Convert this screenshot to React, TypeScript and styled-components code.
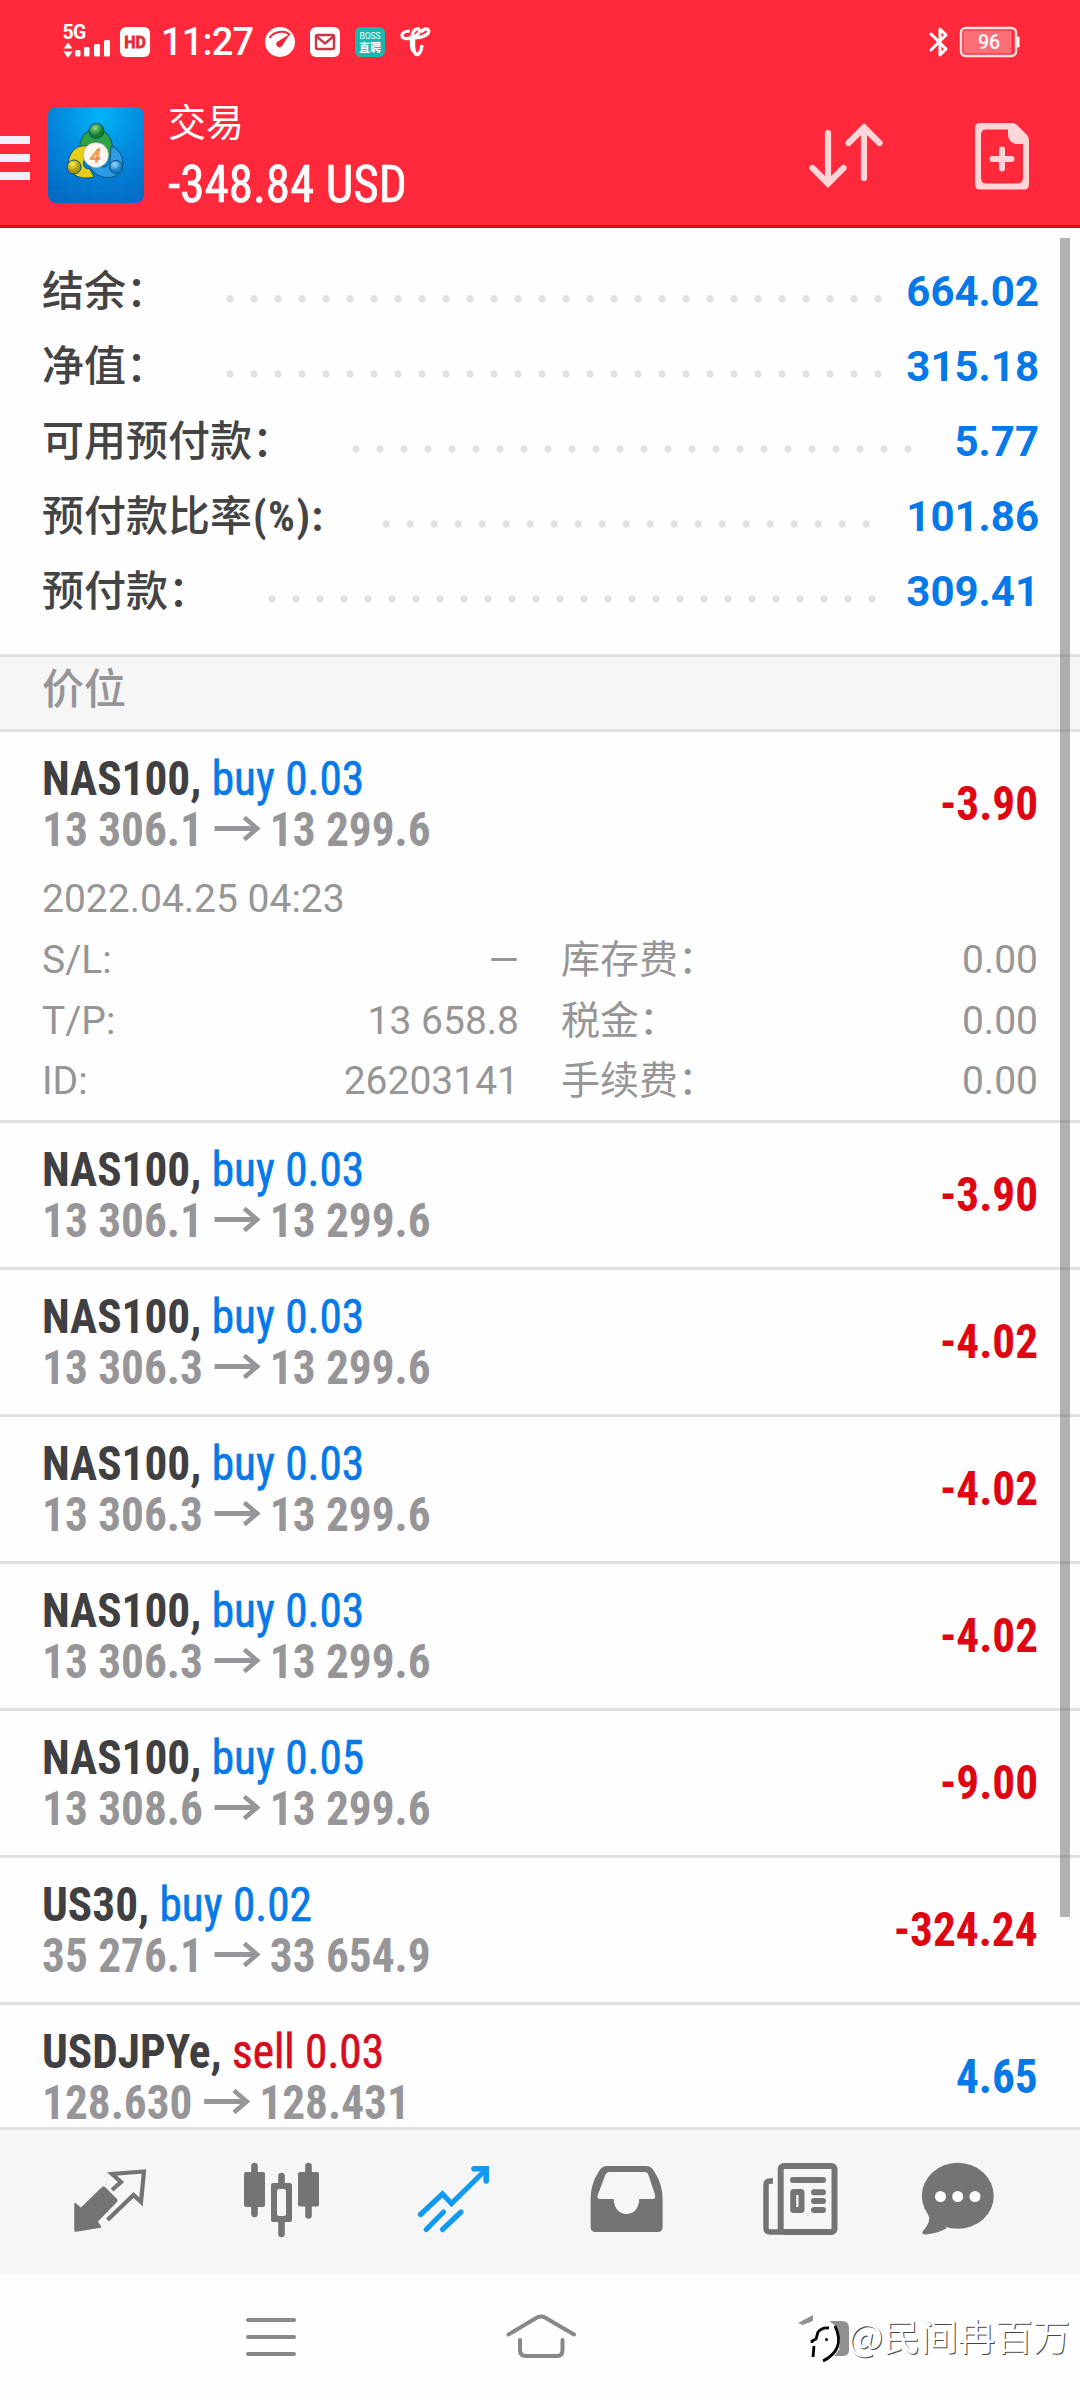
import React from 'react';
import styled, { createGlobalStyle } from 'styled-components';

const sans = `Roboto, "Noto Sans CJK SC", sans-serif`;
const condensed = `"Roboto Condensed", Roboto, "Noto Sans CJK SC", sans-serif`;

const GlobalStyle = createGlobalStyle`
  * { box-sizing: border-box; }
  body { margin: 0; background: #fff; font-family: ${sans}; }
  svg { display: block; flex: none; }
`;

const Screen = styled.div`
  position: relative;
  width: 1080px;
  height: 2400px;
  display: flex;
  flex-direction: column;
  overflow: hidden;
  background: #fefefe;
`;

/* ---------- header ---------- */
const Header = styled.header`
  flex: none;
  height: 228px;
  background: #ff293b;
  border-bottom: 3px solid #d80e1e;
  display: flex;
  flex-direction: column;
  color: #fff;
`;
const StatusBar = styled.div`
  height: 84px;
  padding: 0 59px 0 62px;
  display: flex;
  align-items: center;
  justify-content: space-between;
`;
const StatusGroup = styled.div`
  display: flex;
  align-items: center;
`;
const Clock = styled.span`
  width: 115px;
  padding-left: 11px;
  font-size: 38px;
  line-height: 84px;
  font-weight: 500;
  letter-spacing: -0.8px;
`;
const TitleBar = styled.div`
  height: 141px;
  display: flex;
  align-items: flex-start;
`;
const Burger = styled.div`
  width: 30px;
  margin-top: 52px;
  display: flex;
  flex-direction: column;
  gap: 10px;
`;
const BurgerLine = styled.i`
  height: 8px;
  background: #f3f0fb;
`;
const AppIcon = styled.div`
  margin: 23px 0 0 18px;
`;
const Heading = styled.div`
  flex: 1;
  margin-left: 24px;
  display: flex;
  flex-direction: column;
`;
const Title = styled.div`
  margin-top: 18px;
  font-size: 38px;
  line-height: 42px;
`;
const Total = styled.div`
  margin-top: 11px;
  font: 400 51px/60px ${condensed};
  font-stretch: 75%;
  transform: scaleX(0.963);
  transform-origin: left;
  -webkit-text-stroke: 0.7px currentColor;
  white-space: nowrap;
`;
const HeaderActions = styled.div`
  display: flex;
  gap: 86px;
  padding: 36px 48px 0 0;
`;

/* ---------- account summary ---------- */
const Content = styled.main`
  height: 1899px;
  flex: none;
  overflow: hidden;
  position: relative;
`;
const ScrollThumb = styled.div`
  position: absolute;
  top: 10px;
  right: 10px;
  width: 10px;
  height: 1679px;
  background: rgba(110, 110, 110, 0.53);
`;
const Summary = styled.section`
  padding: 24px 41px 27px 42px;
`;
const SummaryRow = styled.div`
  height: 75px;
  display: flex;
  align-items: center;
`;
const SummaryLabel = styled.span`
  padding-top: 4px;
  font-size: 42px;
  line-height: 71px;
  font-weight: 500;
  color: #444;
  white-space: nowrap;
`;
const Narrow = styled.span`
  margin-left: 1px;
  font-family: ${condensed};
  font-stretch: 75%;
  font-weight: 700;
  letter-spacing: 1.5px;
`;
const Dots = styled.span<{ $count: number; $gap: number }>`
  width: ${p => p.$count * 24}px;
  height: 8px;
  margin: 19px 0 0 ${p => p.$gap}px;
  background: radial-gradient(circle at 12px 4px, #e1e1e1 3.2px, transparent 4px) 0 0 / 24px 8px repeat-x;
`;
const SummaryValue = styled.span`
  margin-left: auto;
  font-size: 42px;
  font-weight: 700;
  color: #0579e8;
  padding-top: 3px;
`;
const SectionHeader = styled.div`
  height: 78px;
  padding-left: 42px;
  border: solid #e0e0e0;
  border-width: 3px 0;
  background: #f6f6f6;
  color: #959597;
  font-size: 42px;
  font-weight: 500;
  line-height: 66px;
`;

/* ---------- positions ---------- */
const Position = styled.article`
  border-bottom: 3px solid #e0e0e0;
`;
const PositionHead = styled.div`
  height: 144px;
  padding: 21px 42px 0;
  display: flex;
  justify-content: space-between;
  font: 700 48px/51px ${condensed};
  font-stretch: 75%;
  white-space: nowrap;
`;
const Instrument = styled.div`
  transform: scaleX(0.943);
  transform-origin: left;
`;
const Symbol = styled.div`
  color: #404042;
`;
const Side = styled.span<{ $sell?: boolean }>`
  font-weight: 400;
  -webkit-text-stroke: 0.6px currentColor;
  color: ${p => (p.$sell ? '#d60b1c' : '#0579e8')};
`;
const Prices = styled.div`
  display: flex;
  align-items: center;
  color: #969698;
`;
const Profit = styled.div<{ $gain?: boolean }>`
  margin-top: 25px;
  transform: scaleX(0.943);
  transform-origin: right;
  color: ${p => (p.$gain ? '#0579e8' : '#df0614')};
`;
const Details = styled.div`
  padding: 0 42px 4px;
  color: #969696;
  font-size: 39px;
  font-weight: 400;
`;
const OpenTime = styled.div`
  height: 60px;
  line-height: 51px;
  margin-top: -2px;
`;
const DetailGrid = styled.div`
  display: grid;
  grid-template-columns: 477px 477px;
  column-gap: 42px;
  grid-template-rows: 61px 60px 61px;
`;
const DetailCell = styled.div`
  display: flex;
  justify-content: space-between;
  line-height: 52px;
`;

/* ---------- bottom ---------- */
const TabBar = styled.nav`
  flex: none;
  height: 147px;
  border-top: 3px solid #e2e2e2;
  background: #f6f6f6;
  display: flex;
  padding-left: 24px;
`;
const SystemBar = styled.div`
  flex: 1;
  display: flex;
`;
const Watermark = styled.div`
  position: absolute;
  right: 10px;
  bottom: 37px;
  display: flex;
  align-items: center;
  color: #fff;
  font: 400 37.4px/56px "Noto Sans CJK SC", sans-serif;
  text-shadow: 1px 1px 0 #444;
`;

const Arrow = () => (
  <svg width="71" height="51" viewBox="0 0 71 51" fill="none" stroke="#969698" strokeWidth="4.800">
    <path d="M12 24.500H57M43.500 13.500L57 24.500L43.500 35.500" />
  </svg>
);

const Logo = () => (
  <svg width="96" height="96" viewBox="0 0 96 96">
    <defs>
      <radialGradient id="sky" cx=".55" cy=".1" r="1">
        <stop offset="0" stopColor="#00b4f8" /><stop offset=".5" stopColor="#0285da" /><stop offset="1" stopColor="#0468c2" />
      </radialGradient>
      <radialGradient id="green" cx=".4" cy=".3"><stop offset="0" stopColor="#8fdc83" /><stop offset="1" stopColor="#137c2b" /></radialGradient>
      <radialGradient id="gold" cx=".4" cy=".3"><stop offset="0" stopColor="#fff24a" /><stop offset="1" stopColor="#a49408" /></radialGradient>
      <radialGradient id="blue" cx=".4" cy=".3"><stop offset="0" stopColor="#9bdcff" /><stop offset="1" stopColor="#127fca" /></radialGradient>
    </defs>
    <rect width="96" height="96" rx="8" fill="url(#sky)" />
    <path d="M12 0V96M24 0V96M36 0V96M48 0V96M60 0V96M72 0V96M84 0V96M0 12H96M0 24H96M0 36H96M0 48H96M0 60H96M0 72H96M0 84H96" stroke="#3aa9f0" strokeOpacity=".1" />
    <g stroke="#0a4f78" strokeWidth="1">
      <path d="M32 45C30 31 38 22 48 22C60 22 67 35 64 50L57 48C56 40 54 35 48 35C41 35 42 42 38 45Z" fill="#2fa342" />
      <path d="M40 39C27 37 20 47 20 59C23 70 35 73 46 70L42 62C35 62 34 57 37 52Z" fill="#e5cf18" />
      <path d="M63 39C72 42 77 52 74 62C68 74 50 74 41 59L50 57C56 63 63 59 62 51Z" fill="#2b9be3" />
      <circle cx="48.500" cy="24" r="7.500" fill="url(#green)" />
      <circle cx="26" cy="60" r="7" fill="url(#gold)" />
      <circle cx="68" cy="60" r="6.500" fill="url(#blue)" />
    </g>
    <circle cx="48" cy="48" r="12.500" fill="#fbf7f0" stroke="#b5b5a5" strokeWidth=".8" />
    <text x="47.500" y="55" textAnchor="middle" fontFamily="Roboto" fontStyle="italic" fontSize="19" fill="#fce0a0" stroke="#ee8a45" strokeWidth="1">4</text>
  </svg>
);

const LeftStatus = () => (
  <StatusGroup>
    <svg width="88" height="44" viewBox="62 20 88 44" fill="#fff">
      <text x="62.500" y="39" fontFamily="Roboto" fontWeight="700" fontSize="19.500" letterSpacing="-.8">5G</text>
      <path d="M63.500 48.500L68 42.500L72.500 48.500ZM63.500 51.500H72.500L68 58Z" />
      <rect x="75" y="50" width="5.500" height="6.500" rx="1.500" /><rect x="84" y="47" width="5.500" height="9.500" rx="1.500" />
      <rect x="94" y="44" width="6" height="12.500" rx="1.500" /><rect x="104" y="40" width="6" height="16.500" rx="1.500" />
      <rect x="120" y="27" width="30" height="30" rx="6" />
      <text x="135" y="47.500" textAnchor="middle" fontFamily="Roboto" fontWeight="700" fontSize="16" fill="#e12d3c" stroke="#e12d3c" strokeWidth=".8">HD</text>
    </svg>
    <Clock>11:27</Clock>
    <svg width="166" height="36" viewBox="265 24 166 36" fill="none">
      <circle cx="280" cy="42" r="15" fill="#fff" />
      <path d="M269.500 38C274 31 285 30 290 35" stroke="#e9293a" strokeWidth="2" />
      <path d="M290 34L277 42A3 3 0 0 0 282 46Z" fill="#e9293a" />
      <rect x="310" y="27" width="30" height="30" rx="6" fill="#fff" />
      <rect x="316" y="35" width="18" height="14" rx="1.500" stroke="#cc3543" strokeWidth="2.400" />
      <path d="M316 36L325 43.500L334 36" stroke="#cc3543" strokeWidth="2.400" />
      <rect x="355" y="27" width="30" height="30" rx="6" fill="#17b8ae" />
      <text x="370" y="38.500" textAnchor="middle" fontFamily="Roboto" fontSize="8.500" fill="#fff">BOSS</text>
      <text x="370" y="51.500" textAnchor="middle" fontFamily="Noto Sans CJK SC" fontWeight="700" fontSize="11" fill="#fff">直聘</text>
      <path d="M410 31C402 31 399 37 405 38.500C412 39 420 34 419.500 30.500C419 26.500 413 29 412 36C411 42 411 48 413.500 52" stroke="#fff" strokeWidth="3.200" />
      <path d="M412 37C420 39 429.500 35 428.500 30.500C427.500 27.500 424 29 421 32M414 37C413 45 413 50 415.500 54C419 56 421.500 51 422 45" stroke="#fff" strokeWidth="3.400" />
    </svg>
  </StatusGroup>
);

const RightStatus = () => (
  <svg width="93" height="36" viewBox="928 24 93 36" fill="none">
    <path d="M931 34L946 49L940 55V29L946 35L931 50" stroke="#fff" strokeWidth="3" strokeLinejoin="round" strokeLinecap="round" />
    <rect x="961" y="28" width="55" height="28" rx="4.500" stroke="#ffe5e2" strokeWidth="2.400" />
    <rect x="963.500" y="30.500" width="48" height="23" rx="1" fill="#ff6f78" />
    <path d="M1017.500 37H1019V47H1017.500Z" fill="#fff" stroke="#fff" />
    <text x="989" y="49" textAnchor="middle" fontFamily="Roboto" fontWeight="500" fontSize="19.500" fill="#fff">96</text>
  </svg>
);

const TabIcons = () => (
  <>
    <svg width="172" height="144" viewBox="24 2130 172 144">
      <path d="M75 2203.500L81 2208.500L102 2188Q103.500 2186.500 105 2188L116 2199Q117.500 2200.500 116 2202L97 2221.500L100.500 2227L76 2231Q75 2231.200 75 2230Z" fill="#747474" stroke="#747474" strokeWidth="1.500" strokeLinejoin="round" />
      <path d="M112 2190L121 2182L112 2174L144 2171.500L141 2202L133.500 2195L107.500 2220" fill="none" stroke="#747474" strokeWidth="4.200" />
    </svg>
    <svg width="173" height="144" viewBox="196 2130 173 144">
      <g stroke="#747474" strokeWidth="6.600" strokeLinecap="round">
        <path d="M254.500 2166V2214M281.500 2176V2185M281.500 2220V2234M308.500 2166V2215.500" />
      </g>
      <g fill="#747474">
        <rect x="244" y="2172" width="21" height="35" rx="2" /><rect x="298" y="2172" width="21" height="34.500" rx="2" />
        <path fillRule="evenodd" d="M273 2183H290Q292 2183 292 2185V2220Q292 2222 290 2222H273Q271 2222 271 2220V2185Q271 2183 273 2183ZM279 2189Q277 2189 277 2191V2214Q277 2216 279 2216H284Q286 2216 286 2214V2191Q286 2189 284 2189Z" />
      </g>
    </svg>
    <svg width="172" height="144" viewBox="369 2130 172 144" fill="none" stroke="#119af3" strokeWidth="5.200" strokeLinecap="round">
      <path d="M420.500 2214.500L442.500 2194L451.500 2203.500L486 2169.500" strokeLinejoin="miter" />
      <path d="M474 2168.700H486.200V2181" strokeWidth="5.600" />
      <path d="M426.200 2229.500L443.500 2212M442.500 2229.500L461 2212" />
    </svg>
    <svg width="173" height="144" viewBox="541 2130 173 144">
      <path fillRule="evenodd" fill="#747474" d="M607 2166H646Q651 2166 654 2171Q662.600 2184 662.600 2199V2227Q662.600 2232 658 2232H595.500Q590.600 2232 590.600 2227V2199Q590.600 2184 599 2171Q602 2166 607 2166ZM609 2172Q606.500 2172 605.500 2174.500L597.800 2195Q596.500 2199 600 2199H613.700C614 2209 620 2214 626.500 2214C633 2214 639 2209 639.300 2199H652.500Q656 2199 655 2195L648.500 2175Q647.500 2172 644.500 2172Z" />
    </svg>
    <svg width="172" height="144" viewBox="714 2130 172 144" fill="none" stroke="#747474" strokeWidth="6">
      <rect x="780.700" y="2166" width="53.800" height="66" rx="3" />
      <path d="M773 2181H770Q766 2181 766 2185V2228Q766 2232 770 2232H782" strokeWidth="5.500" />
      <path d="M793 2180H823M814 2192.200H823M814 2201H823M814 2210H823" strokeLinecap="round" />
      <rect x="793.200" y="2192" width="8.300" height="18" rx=".5" />
    </svg>
    <svg width="172" height="144" viewBox="886 2130 172 144" fill="#747474">
      <ellipse cx="957.800" cy="2195.800" rx="36" ry="33" />
      <path d="M928 2214Q932 2221 923 2231Q921 2235 926 2234.500Q939 2233 947 2228Z" />
      <g fill="#fff"><circle cx="940.500" cy="2196.500" r="5.500" /><circle cx="957.700" cy="2196.500" r="5.500" /><circle cx="975" cy="2196.500" r="5.500" /></g>
    </svg>
  </>
);

type Deal = { symbol: string; side: string; from: string; to: string; profit: string; details?: boolean };
const deals: Deal[] = [
  { symbol: 'NAS100', side: 'buy 0.03', from: '13 306.1', to: '13 299.6', profit: '-3.90', details: true },
  { symbol: 'NAS100', side: 'buy 0.03', from: '13 306.1', to: '13 299.6', profit: '-3.90' },
  { symbol: 'NAS100', side: 'buy 0.03', from: '13 306.3', to: '13 299.6', profit: '-4.02' },
  { symbol: 'NAS100', side: 'buy 0.03', from: '13 306.3', to: '13 299.6', profit: '-4.02' },
  { symbol: 'NAS100', side: 'buy 0.03', from: '13 306.3', to: '13 299.6', profit: '-4.02' },
  { symbol: 'NAS100', side: 'buy 0.05', from: '13 308.6', to: '13 299.6', profit: '-9.00' },
  { symbol: 'US30', side: 'buy 0.02', from: '35 276.1', to: '33 654.9', profit: '-324.24' },
  { symbol: 'USDJPYe', side: 'sell 0.03', from: '128.630', to: '128.431', profit: '4.65' },
];
const summary = [
  { label: '结余：', value: '664.02', dots: 28, gap: 50 },
  { label: '净值：', value: '315.18', dots: 28, gap: 50 },
  { label: '可用预付款：', value: '5.77', dots: 24, gap: 50 },
  { label: '预付款比率', suffix: '(%):', value: '101.86', dots: 21, gap: 50 },
  { label: '预付款：', value: '309.41', dots: 26, gap: 50 },
];
const details = [
  ['S/L:', '—', '库存费：', '0.00'],
  ['T/P:', '13 658.8', '税金：', '0.00'],
  ['ID:', '26203141', '手续费：', '0.00'],
];

export default function App() {
  return (
    <Screen>
      <GlobalStyle />
      <Header>
        <StatusBar><LeftStatus /><RightStatus /></StatusBar>
        <TitleBar>
          <Burger><BurgerLine /><BurgerLine /><BurgerLine /></Burger>
          <AppIcon><Logo /></AppIcon>
          <Heading>
            <Title>交易</Title>
            <Total>-348.84 USD</Total>
          </Heading>
          <HeaderActions>
            <svg width="80" height="72" viewBox="808 120 80 72" fill="none" stroke="#ffd6d7" strokeWidth="6.200" strokeLinecap="round">
              <path d="M828 133V183M812.500 168L828 183.500L843.500 168M864 178V128M848.500 143L864 127.500L879.500 143" />
            </svg>
            <svg width="58" height="72" viewBox="974 120 58 72" fill="#ffd6d7">
              <path fillRule="evenodd" d="M980 123H1012Q1015 123 1017 125L1027 135Q1029 137 1029 140V184Q1029 189.500 1024 189.500H980Q975 189.500 975 184V128Q975 123 980 123ZM986 129.500Q981 129.500 981 135V178Q981 183.500 986 183.500H1017Q1023 183.500 1023 178V144H1016Q1008 142 1008 134V129.500Z" />
              <path d="M1002 149.500V168.500M992.500 159H1011.500" stroke="#ffd6d7" strokeWidth="6" strokeLinecap="round" />
            </svg>
          </HeaderActions>
        </TitleBar>
      </Header>

      <Content>
        <Summary>
          {summary.map(s => (
            <SummaryRow key={s.label}>
              <SummaryLabel>{s.label}{s.suffix && <Narrow>{s.suffix}</Narrow>}</SummaryLabel>
              <Dots $count={s.dots} $gap={s.gap} />
              <SummaryValue>{s.value}</SummaryValue>
            </SummaryRow>
          ))}
        </Summary>
        <SectionHeader>价位</SectionHeader>
        {deals.map((d, i) => (
          <Position key={i}>
            <PositionHead>
              <Instrument>
                <Symbol>{d.symbol}, <Side $sell={d.side.startsWith('sell')}>{d.side}</Side></Symbol>
                <Prices>{d.from}<Arrow />{d.to}</Prices>
              </Instrument>
              <Profit $gain={!d.profit.startsWith('-')}>{d.profit}</Profit>
            </PositionHead>
            {d.details && (
              <Details>
                <OpenTime>2022.04.25 04:23</OpenTime>
                <DetailGrid>
                  {details.map(([a, b, c, e]) => (
                    <React.Fragment key={a}>
                      <DetailCell><span>{a}</span><span>{b}</span></DetailCell>
                      <DetailCell><span>{c}</span><span>{e}</span></DetailCell>
                    </React.Fragment>
                  ))}
                </DetailGrid>
              </Details>
            )}
          </Position>
        ))}
        <ScrollThumb />
      </Content>

      <TabBar><TabIcons /></TabBar>
      <SystemBar>
        <svg width="540" height="126" viewBox="0 2274 540 126" fill="none" stroke="#888" strokeWidth="4" strokeLinecap="round" style={{ overflow: 'visible' }}>
          <path d="M248 2320H294M248 2337H294M248 2354H294" />
          <path d="M508.500 2334.500L537 2317.500Q541 2315.500 545 2317.500L574 2334.500M520 2340V2350Q520 2356 526 2356H557Q562.500 2356 562.500 2350V2340" />
        </svg>
        <svg width="540" height="126" viewBox="540 2274 540 126" fill="none">
          <path d="M798 2323L813 2315V2321L803 2325ZM822 2321H842Q849 2321 849 2328V2350Q849 2356 842 2356H806V2350H840Z" fill="#909090" />
          <path d="M813 2319Q832 2317 838 2331Q845 2355 824 2362L803 2357L812 2326Z" fill="#fff" />
          <path d="M829 2328Q822 2327 818 2332L816 2339L812 2341V2343M813 2357L814 2346M835 2326Q841 2338 837 2348Q833 2356 823 2361" stroke="#000" strokeWidth="2.800" />
          <circle cx="826.500" cy="2339.500" r="1.500" fill="#000" />
        </svg>
      </SystemBar>
      <Watermark>@民间冉百万</Watermark>
    </Screen>
  );
}
